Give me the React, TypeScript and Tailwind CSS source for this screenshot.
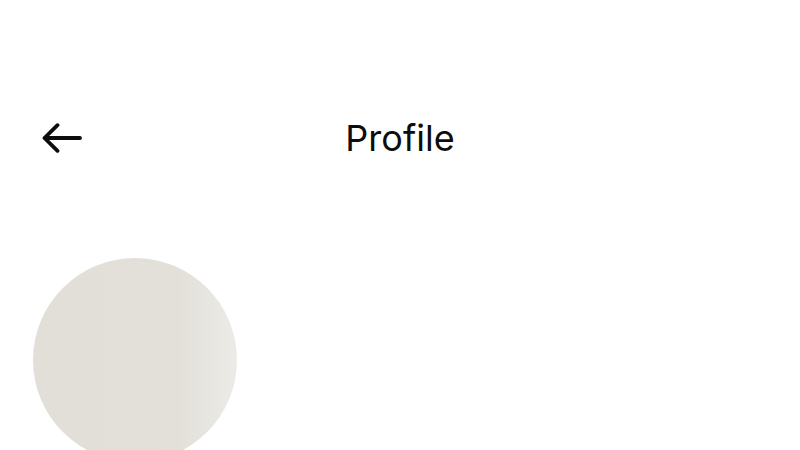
import React from "react";

export default function App() {
  return (
    <div
      className="w-[800px] h-[450px] overflow-hidden bg-white text-black"
      style={{ fontFamily: "Inter, 'Noto Sans', sans-serif" }}
    >
      <div className="pt-[110px] px-[42px] grid grid-cols-[1fr_auto_1fr] items-center h-[165px]">
        <div className="flex items-center">
          <svg width="40" height="30" viewBox="0 0 40 30" fill="none">
            <path
              d="M38 15H2.5M15.5 2.2L2.5 15L15.5 27.8"
              stroke="#0d0d0d"
              strokeWidth="3.8"
              strokeLinecap="round"
              strokeLinejoin="round"
            />
          </svg>
        </div>
        <div className="text-[36px] leading-none text-[#0d0d0d] tracking-[0px]">Profile</div>
        <div />
      </div>
      <div className="pt-[93px] pl-[33px]">
        <div className="w-[204px] h-[204px] rounded-full bg-[linear-gradient(90deg,#e2dfd9_0%,#e3e0da_72%,#ecebe7_100%)]" />
      </div>
    </div>
  );
}
